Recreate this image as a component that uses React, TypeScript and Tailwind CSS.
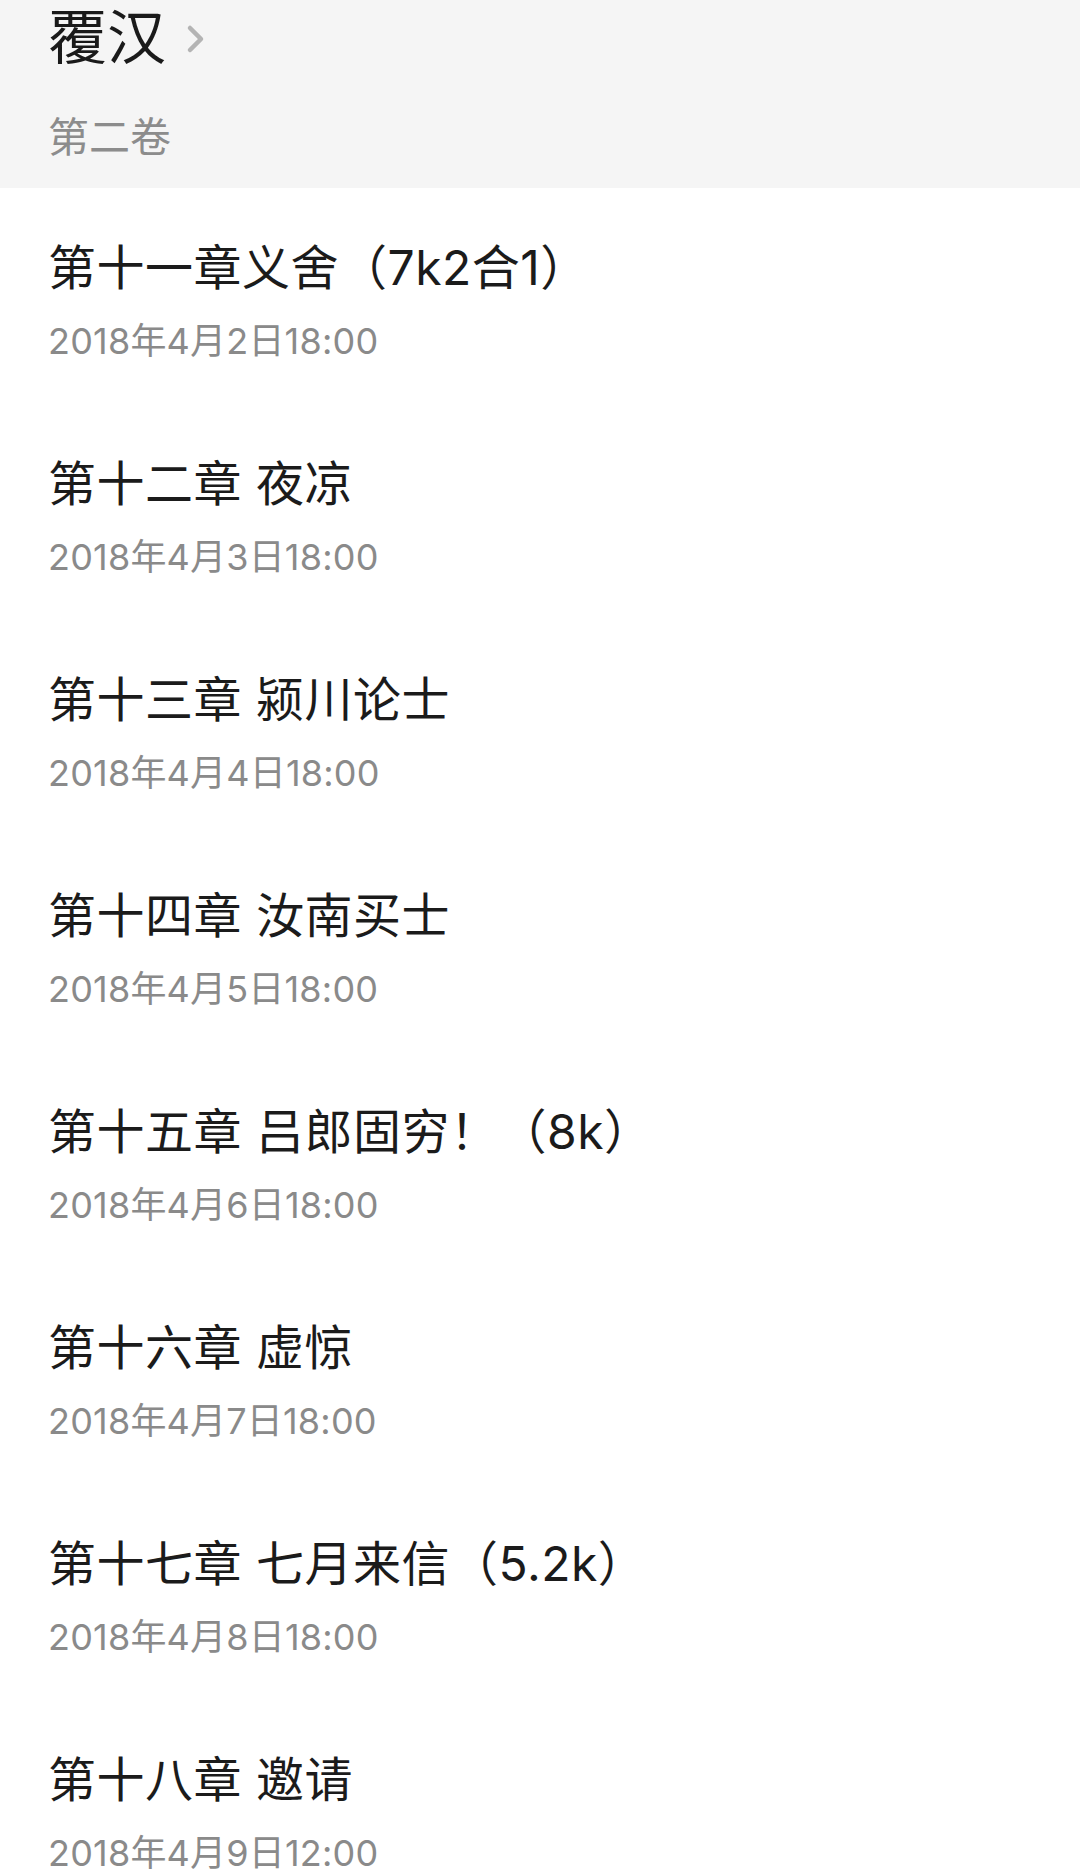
const chapters = [
  { title: "第十一章义舍（7k2合1）", date: "2018年4月2日18:00" },
  { title: "第十二章 夜凉", date: "2018年4月3日18:00" },
  { title: "第十三章 颍川论士", date: "2018年4月4日18:00" },
  { title: "第十四章 汝南买士", date: "2018年4月5日18:00" },
  { title: "第十五章 吕郎固穷！（8k）", date: "2018年4月6日18:00" },
  { title: "第十六章 虚惊", date: "2018年4月7日18:00" },
  { title: "第十七章 七月来信（5.2k）", date: "2018年4月8日18:00" },
  { title: "第十八章 邀请", date: "2018年4月9日12:00" },
];

export default function App() {
  return (
    <div
      className="w-[1080px] h-[1872px] overflow-hidden bg-white"
      style={{ fontFamily: 'Inter, "Noto Sans CJK SC", sans-serif' }}
    >
      {/* Book header */}
      <div className="bg-[#f5f5f5] pl-[48px] pt-[8px] pb-[30px]">
        <div className="flex items-center h-[60px]">
          <span className="text-[59px] leading-[60px] text-[#1a1a1a]">覆汉</span>
          <svg
            width="20"
            height="30"
            viewBox="0 0 20 30"
            className="ml-[19px] mt-[2px]"
            fill="none"
            stroke="#b4b4b4"
            strokeWidth="4.5"
            strokeLinecap="round"
            strokeLinejoin="round"
          >
            <path d="M5 4l11 11-11 11" />
          </svg>
        </div>
        <div className="mt-[48px] text-[41px] leading-[42px] text-[#8c8c8c]">第二卷</div>
      </div>

      {/* Chapter list */}
      <div>
        {chapters.map((c) => (
          <div key={c.title} className="h-[216px] pl-[48px] pt-[52px]">
            <div className="text-[48px] leading-[56px] tracking-[0.5px] text-[#1b1b1b] whitespace-pre">
              {c.title}
            </div>
            <div className="mt-[23px] text-[36px] leading-[44px] tracking-[0.2px] text-[#8a8a8a]">
              {c.date}
            </div>
          </div>
        ))}
      </div>
    </div>
  );
}
